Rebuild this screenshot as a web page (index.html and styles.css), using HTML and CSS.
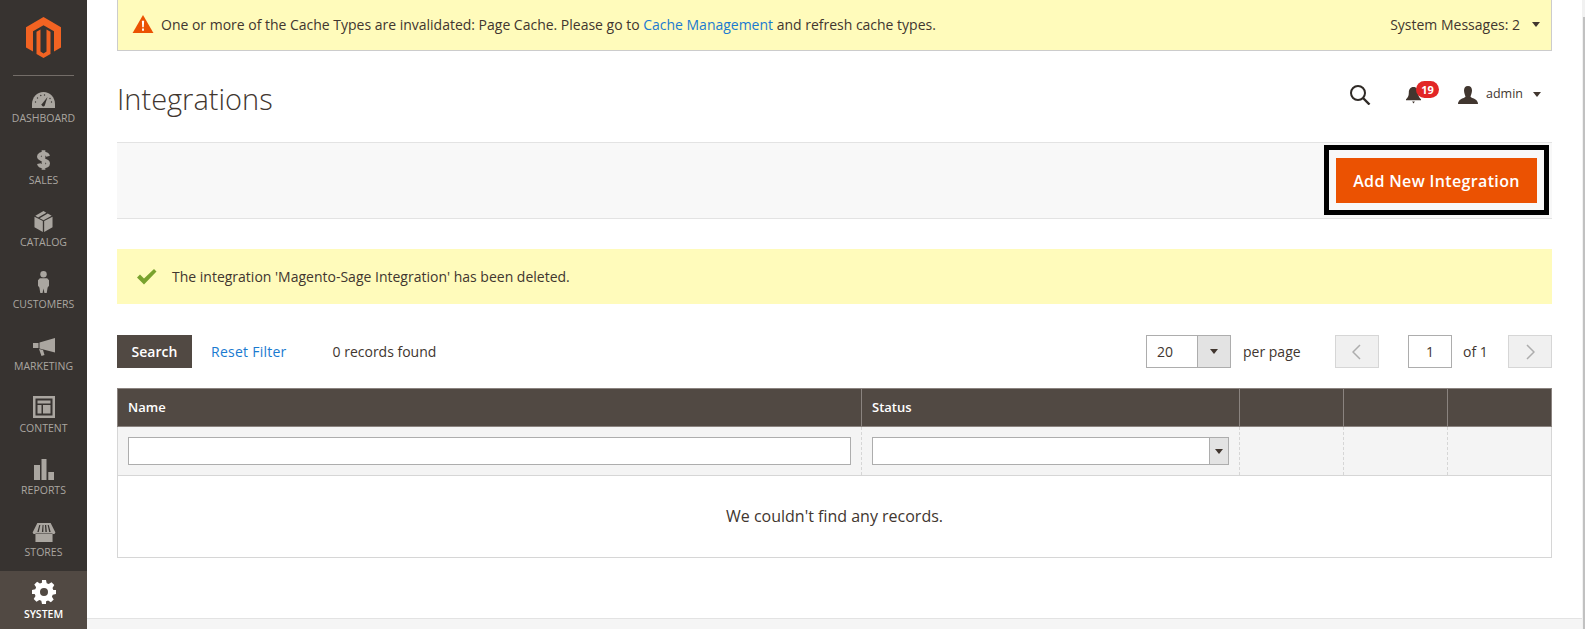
FILE: index.html
```html
<!DOCTYPE html>
<html lang="en">
<head>
    <meta charset="UTF-8">
    <meta name="viewport" content="width=device-width, initial-scale=1.0">
    <title>Integrations</title>
    <link rel="stylesheet" href="styles.css">
</head>
<body>
    <nav class="sidebar">
        <div class="logo">
            <svg width="35" height="41" viewBox="0 0 35 41"><path fill="#f26322" d="M17.5 0 35 10.200v20.400l-7 4V14.300L17.500 8.300 7 14.300v20.300l-7-4V10.200zM17.500 41l-7-4V14.700l4-2.300v22.200l3 1.800 3-1.800V12.400l4 2.300V37z"/></svg>
        </div>
        <a class="nav-item">
            <svg width="23" height="16" viewBox="0 0 23 16">
                <path fill="#aaa6a0" d="M11.500 0C5 0 0 5.500 0 12v4h23v-4C23 5.500 18 0 11.500 0z"/>
                <path fill="#373330" d="M9.700 12.300 15.500 5l-2.800 8.700a1.700 1.700 0 0 1-3-1.400z"/>
                <g fill="#373330">
                    <circle cx="3.500" cy="10" r=".7"/><circle cx="5.500" cy="6" r=".7"/><circle cx="8.800" cy="3.500" r=".7"/><circle cx="12.500" cy="3" r=".7"/><circle cx="19.500" cy="10" r=".7"/><circle cx="18" cy="6.500" r=".7"/>
                </g>
            </svg>
            <span>Dashboard</span>
        </a>
        <a class="nav-item">
            <svg width="13" height="20" viewBox="0 0 14 21"><path fill="none" stroke="#aaa6a0" stroke-width="4" d="M12 6.500C11.500 4.500 9.500 3.500 7 3.500S2 4.800 2 6.800c0 4.700 10 2.700 10 7.400 0 2-2.300 3.300-5 3.300s-4.600-1-5-3M7 0v21"/></svg>
            <span>Sales</span>
        </a>
        <a class="nav-item">
            <svg width="19" height="21" viewBox="0 0 20 22"><path fill="#aaa6a0" d="M9.300 10.500v11.500L.5 17V6zM10.700 10.500V22l8.800-5V6zM10 0l3 1.700-8.700 5L1.400 5zM14.500 2.500l4.100 2.500-8.600 4.800-4.100-2.300z"/></svg>
            <span>Catalog</span>
        </a>
        <a class="nav-item">
            <svg width="11" height="24" viewBox="0 0 12 24"><circle fill="#aaa6a0" cx="6" cy="3.500" r="3.500"/><path fill="#aaa6a0" d="M2 8h8l2 2v6l-1.500 2-1 6H7l-1-5-1 5H2.500l-1-6L0 16v-6z"/></svg>
            <span>Customers</span>
        </a>
        <a class="nav-item">
            <svg width="22" height="18" viewBox="0 0 22 18"><path fill="#aaa6a0" d="M6.500 4.500 22 0v14.500L6.500 10.500zM0 5h5.500v5H0zM6 11l4 1 1.500 5-3 1z"/></svg>
            <span>Marketing</span>
        </a>
        <a class="nav-item">
            <svg width="22" height="22" viewBox="0 0 22 22"><path fill="#aaa6a0" fill-rule="evenodd" d="M0 0h22v22H0zM2.500 2.500v17h17v-17zM4.500 4.500h13v3h-13zM4.500 9h4v8.500h-4zM10 9h7.500v8.500H10z"/></svg>
            <span>Content</span>
        </a>
        <a class="nav-item">
            <svg width="20" height="21" viewBox="0 0 20 21"><path fill="#aaa6a0" d="M0 6h6v15H0zM7.500 0h5v21h-5zM14.300 13H20v8h-5.700z"/></svg>
            <span>Reports</span>
        </a>
        <a class="nav-item">
            <svg width="24" height="19" viewBox="0 0 24 20"><path fill="#aaa6a0" fill-rule="evenodd" d="M3 11h18v9H3zM5 0h14l5 10-1 1.500H1L0 10zM7 2 5 9.500h1.500L8.200 2zM10.500 2l-.7 7.500h1.500l.2-7.500zM13 2l.5 7.500H15L14.300 2zM15.800 2l1.700 7.500H19L17 2z"/></svg>
            <span>Stores</span>
        </a>
        <a class="nav-item active">
            <svg width="24" height="24" viewBox="0 0 24 24"><path fill="#fff" fill-rule="evenodd" d="M10 0h4l.7 3.300 2 .8 2.800-1.800 2.800 2.800-1.800 2.800.8 2L24 10v4l-3.300.7-.8 2 1.800 2.800-2.800 2.800-2.800-1.800-2 .8L14 24h-4l-.7-3.300-2-.8-2.800 1.800-2.800-2.800 1.800-2.800-.8-2L0 14v-4l3.300-.7.8-2-1.800-2.800 2.800-2.800 2.800 1.800 2-.8zM12 8a4 4 0 1 0 0 8 4 4 0 0 0 0-8z"/></svg>
            <span>System</span>
        </a>
    </nav>

    <div class="page">
        <main class="main">
            <div class="notice">
                <svg class="notice-icon" width="22" height="18" viewBox="0 0 22 19"><path fill="#eb5202" d="M11 0l11 19H0z"/><path fill="#fff" d="M9.800 6h2.400l-.4 7h-1.600zM10 14.200h2V16.500h-2z"/></svg>
                <p class="notice-text">One or more of the Cache Types are invalidated: Page Cache. Please go to <a class="link">Cache Management</a> and refresh cache types.</p>
                <span class="notice-count">System Messages: 2</span>
                <i class="caret notice-caret"></i>
            </div>

            <header class="page-head">
                <h1>Integrations</h1>
                <div class="head-tools">
                    <svg class="search-icon" width="21" height="20" viewBox="0 0 21 20"><circle cx="8" cy="8" r="7" fill="none" stroke="#2f2a26" stroke-width="2"/><path d="M13 13l6.500 6.500" stroke="#2f2a26" stroke-width="2.400"/></svg>
                    <div class="bell">
                        <svg width="15" height="18" viewBox="0 0 16 19"><path fill="#41362f" d="M8 1c3.500 0 5 2.800 5 6 0 3.500 1 5 3 7v1H0v-1c2-2 3-3.500 3-7 0-3.200 1.500-6 5-6zM6.500 16.500h3L8 18.500z"/></svg>
                        <b class="badge">19</b>
                    </div>
                    <div class="user">
                        <svg width="20" height="18" viewBox="0 0 20 18"><path fill="#41362f" d="M10 0c2.800 0 4 2 4 4.500S12.800 9.500 12.500 10.500c0 1 3 1.700 5 3 1.500 1 2.500 2.500 2.500 4.500H0c0-2 1-3.500 2.500-4.500 2-1.300 5-2 5-3C7.200 9.500 6 7 6 4.500S7.200 0 10 0z"/></svg>
                        <span class="user-name">admin</span>
                        <i class="caret"></i>
                    </div>
                </div>
            </header>

            <div class="actions">
                <div class="highlight">
                    <button class="btn-primary">Add New Integration</button>
                </div>
            </div>

            <div class="message">
                <svg width="20" height="16" viewBox="0 0 20 16"><path fill="#79a22e" d="M0 8.500 3 5.500l4 4L17 0l2.500 2.500L7 15.500z"/></svg>
                <span>The integration 'Magento-Sage Integration' has been deleted.</span>
            </div>

            <div class="toolbar">
                <button class="btn-search">Search</button>
                <a class="link reset">Reset Filter</a>
                <span class="found">0 records found</span>
                <div class="pager">
                    <div class="per-page">
                        <span class="per-value">20</span>
                        <span class="per-arrow"><i class="caret"></i></span>
                    </div>
                    <span class="per-label">per page</span>
                    <button class="page-btn">
                        <svg width="10" height="16" viewBox="0 0 10 16"><path fill="none" stroke="#adadad" stroke-width="1.500" d="M8 1 1 8l7 7"/></svg>
                    </button>
                    <span class="page-input">1</span>
                    <span class="page-of">of 1</span>
                    <button class="page-btn">
                        <svg width="10" height="16" viewBox="0 0 10 16"><path fill="none" stroke="#adadad" stroke-width="1.500" d="M2 1l7 7-7 7"/></svg>
                    </button>
                </div>
            </div>

            <table class="grid">
                <thead>
                    <tr>
                        <th class="col-name">Name</th>
                        <th class="col-status">Status</th>
                        <th></th>
                        <th></th>
                        <th></th>
                    </tr>
                </thead>
                <tbody>
                    <tr class="filters">
                        <td><div class="field"></div></td>
                        <td>
                            <div class="field field-select">
                                <span class="field-arrow"><i class="caret"></i></span>
                            </div>
                        </td>
                        <td></td>
                        <td></td>
                        <td></td>
                    </tr>
                    <tr>
                        <td class="empty" colspan="5">We couldn't find any records.</td>
                    </tr>
                </tbody>
            </table>
        </main>
        <footer class="footer"></footer>
    </div>

    <div class="scrollbar"><div class="scroll-thumb"></div></div>
</body>
</html>
```

FILE: styles.css
```css
* {
    box-sizing: border-box;
}

html, body {
    height: 100%;
}

body {
    margin: 0;
    display: flex;
    overflow: hidden;
    font-family: "Open Sans", sans-serif;
    font-size: 14px;
    color: #41362f;
    background-color: #fff;
}

p, h1 {
    margin: 0;
}

button {
    font-family: inherit;
    border: 0;
    padding: 0;
}

/* sidebar */
.sidebar {
    width: 87px;
    flex-shrink: 0;
    background-color: #373330;
    height: 100%;
    overflow: hidden;
}

.logo {
    height: 76px;
    margin: 0 13px -1px;
    padding-top: 17px;
    display: flex;
    justify-content: center;
    align-items: flex-start;
    border-bottom: 1px solid #736d68;
}

.nav-item {
    height: 62px;
    padding-bottom: 12px;
    display: flex;
    flex-direction: column;
    align-items: center;
    justify-content: flex-end;
    gap: 3px;
    color: #aaa6a0;
    font-size: 10.500px;
    line-height: 14px;
    text-transform: uppercase;
}

.nav-item.active {
    background-color: #514943;
    color: #fff;
    font-weight: 600;
}

/* top */
.page {
    flex: 1;
    display: flex;
    flex-direction: column;
    min-width: 0;
}

.main {
    flex: 1;
    padding: 0 30px;
}

.notice {
    height: 51px;
    display: flex;
    align-items: center;
    padding: 0 11px 2px 14px;
    background-color: #fffbbb;
    border: 1px solid #ccc;
    border-top: 0;
}

.notice-icon {
    margin-right: 7px;
}

.notice-text {
    flex: 1;
    letter-spacing: -0.01px;
}

.link {
    color: #1a7ad0;
}

.notice-caret {
    margin-left: 12px;
}

.caret {
    display: inline-block;
    border-style: solid;
    border-width: 5px 4.500px 0;
    border-color: #41362f transparent transparent;
}

.page-head {
    height: 91px;
    display: flex;
    align-items: center;
    justify-content: space-between;
}

h1 {
    font-size: 29px;
    font-weight: 300;
    line-height: 36px;
    margin-top: 5px;
}

.head-tools {
    display: flex;
    align-items: center;
    margin-top: -4px;
    padding-right: 11px;
}

.search-icon {
    margin-right: 35px;
}

.bell {
    position: relative;
    display: flex;
    margin-right: 37px;
}

.badge {
    position: absolute;
    top: -5px;
    left: 10px;
    width: 23px;
    height: 17px;
    border-radius: 9px;
    background-color: #e22626;
    color: #fff;
    font-size: 11px;
    line-height: 17px;
    text-align: center;
}

.user {
    display: flex;
    align-items: center;
    font-size: 12.500px;
    gap: 8px;
}

.user-name {
    margin: 0 2px 2px 0;
}

/* action bar */
.actions {
    height: 77px;
    display: flex;
    justify-content: flex-end;
    align-items: center;
    padding-right: 3px;
    background-color: #f8f8f8;
    border-top: 1px solid #e3e3e3;
    border-bottom: 1px solid #e3e3e3;
}

.highlight {
    width: 225px;
    height: 70px;
    margin-bottom: 1px;
    padding: 8px 7px;
    border: 5px solid #000;
}

.btn-primary {
    width: 201px;
    height: 45px;
    background-color: #eb5202;
    color: #fff;
    font-size: 16px;
    font-weight: 600;
    letter-spacing: 0.35px;
}

.message {
    height: 55px;
    margin-top: 30px;
    padding-left: 20px;
    display: flex;
    align-items: center;
    gap: 15px;
    background-color: #fffbbb;
}

/* grid toolbar */
.toolbar {
    height: 33px;
    margin-top: 31px;
    display: flex;
    align-items: center;
}

.btn-search {
    width: 75px;
    height: 33px;
    background-color: #514943;
    color: #fff;
    font-size: 14px;
    font-weight: 600;
}

.reset {
    margin-left: 19px;
    letter-spacing: 0.25px;
}

.found {
    margin-left: 46px;
}

.pager {
    margin-left: auto;
    display: flex;
    align-items: center;
}

.per-page {
    width: 85px;
    height: 33px;
    display: flex;
    border: 1px solid #adadad;
}

.per-value {
    flex: 1;
    padding-left: 10px;
    line-height: 31px;
}

.per-arrow {
    width: 33px;
    display: flex;
    align-items: center;
    justify-content: center;
    background-color: #e3e3e3;
    border-left: 1px solid #adadad;
}

.per-label {
    margin-left: 12px;
    width: 92px;
}

.page-btn {
    width: 44px;
    height: 33px;
    display: flex;
    align-items: center;
    justify-content: center;
    background-color: #f0f0f0;
    border: 1px solid #d6d6d6;
}

.page-input {
    width: 44px;
    height: 33px;
    margin-left: 29px;
    border: 1px solid #adadad;
    text-align: center;
    line-height: 31px;
}

.page-of {
    margin-left: 11px;
    width: 45px;
}

/* table */
.grid {
    width: 100%;
    margin-top: 20px;
    border-collapse: collapse;
    table-layout: fixed;
}

.grid th {
    height: 38px;
    padding: 0 10px 2px;
    background-color: #514943;
    border: 1px solid #8a837f;
    color: #fff;
    font-size: 13px;
    font-weight: 600;
    text-align: left;
}

.col-name {
    width: 744px;
}

.col-status {
    width: 378px;
}

.filters td {
    height: 49px;
    padding: 0 10px;
    background-color: #f4f4f4;
    border-left: 1px dashed #d6d6d6;
    border-right: 1px dashed #d6d6d6;
    border-bottom: 1px solid #d6d6d6;
}

.filters td:first-child {
    border-left: 1px solid #d6d6d6;
}

.filters td:last-child {
    border-right: 1px solid #d6d6d6;
}

.field {
    height: 28px;
    display: flex;
    justify-content: flex-end;
    background-color: #fff;
    border: 1px solid #adadad;
}

.field-arrow {
    width: 19px;
    display: flex;
    align-items: center;
    justify-content: center;
    background-color: #e3e3e3;
    border-left: 1px solid #adadad;
}

.empty {
    height: 82px;
    padding-bottom: 2px;
    text-align: center;
    font-size: 16px;
    border: 1px solid #d6d6d6;
}

.footer {
    height: 11px;
    background-color: #f5f5f5;
    border-top: 1px solid #e3e3e3;
}

/* window scrollbar edge */
.scrollbar {
    width: 3px;
    flex-shrink: 0;
    padding-top: 17px;
    display: flex;
    justify-content: flex-end;
    background-color: #f1f1f1;
}

.scroll-thumb {
    width: 2px;
    height: 100%;
    background-color: #c1c1c1;
}
```
